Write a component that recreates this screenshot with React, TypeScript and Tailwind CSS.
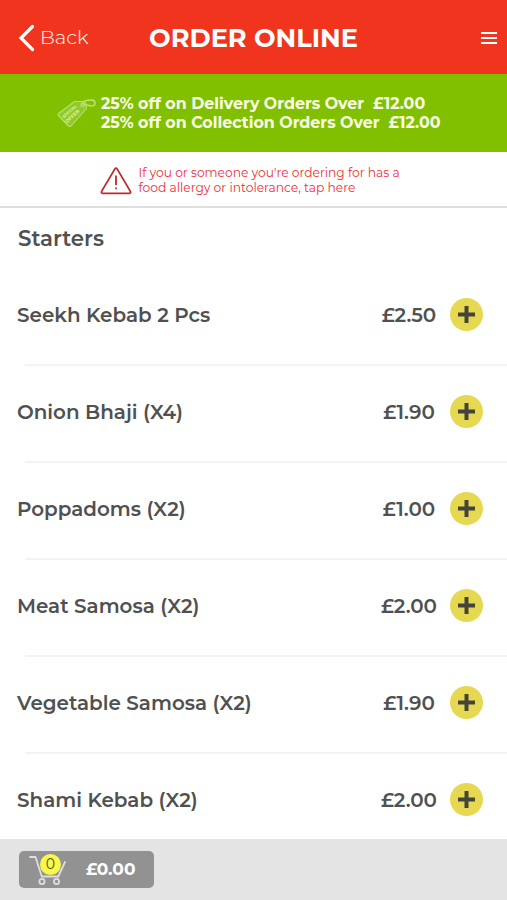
import { useState } from 'react';

const starters = [
    { name: 'Seekh Kebab 2 Pcs', price: '£2.50' },
    { name: 'Onion Bhaji (X4)', price: '£1.90' },
    { name: 'Poppadoms (X2)', price: '£1.00' },
    { name: 'Meat Samosa (X2)', price: '£2.00' },
    { name: 'Vegetable Samosa (X2)', price: '£1.90' },
    { name: 'Shami Kebab (X2)', price: '£2.00' },
];

function OfferTag() {
    return (
        <svg width="40" height="32" viewBox="0 0 40 32" fill="none" stroke="#b9e070" strokeWidth="1.1" strokeLinejoin="round" className="shrink-0">
            <path d="M1.500 16.500 17.500 4.500 25 4.500Q28.500 4.700 29 7l.5 4.500L14.500 28.500Q12.800 30.500 11 28.500L1.500 18.500Q.7 17.500 1.500 16.500Z" fill="#ffffff" fillOpacity="0.15" />
            <circle cx="25.500" cy="8" r="1.800" />
            <path d="M25.500 7.500C26 4 28 3 35 3c4 .3 4 6 0 6-3 0-5-1.500-9-1.500Z" strokeWidth="1.600" />
            <g fontWeight="700" fill="#d8f0a8" stroke="none" textAnchor="middle">
                <text transform="translate(13.500 15.500) rotate(-42)" fontSize="4">SPECIAL</text>
                <text transform="translate(16.500 20.500) rotate(-42)" fontSize="5">OFFER</text>
            </g>
        </svg>
    );
}

function WarningIcon() {
    return (
        <svg width="32" height="28" viewBox="0 0 32 29" preserveAspectRatio="none" fill="none" stroke="#bd2b2b" strokeWidth="1.800" strokeLinejoin="round" strokeLinecap="round" className="mt-[1px] shrink-0">
            <path d="M14.900 1.900Q16 .6 17.100 1.900L30.400 25.300Q31 27.300 29.200 27.300H2.800Q1 27.300 1.600 25.300Z" />
            <path d="M16 9.500v8.500M16 21.800v.4" />
        </svg>
    );
}

function CartIcon() {
    return (
        <svg width="40" height="32" viewBox="0 0 40 32" fill="none" stroke="#dedede" strokeWidth="1.800" strokeLinecap="round" strokeLinejoin="round">
            <path d="M2 3h5.500l6.300 19.500h16.500L37 8" />
            <circle cx="14" cy="27.500" r="2.600" />
            <circle cx="28.500" cy="27.500" r="2.600" />
        </svg>
    );
}

export default function App() {
    const [count, setCount] = useState(0);

    return (
        <div className="flex h-[900px] w-[507px] flex-col overflow-hidden bg-white font-['Montserrat','Inter',sans-serif] text-[#505050]">
            <header className="grid h-[74px] shrink-0 grid-cols-[127px_1fr_127px] items-center bg-[#f0341e] pt-[2px] text-white">
                <button className="flex items-center pl-[18px]">
                    <svg width="17" height="28" viewBox="0 0 17 28" fill="none" stroke="currentColor" strokeWidth="3.200" strokeLinecap="round">
                        <path d="M14.500 2.500 3 14l11.500 11.500" />
                    </svg>
                    <span className="mb-[2px] ml-[5px] text-[19.700px] leading-7 font-light">Back</span>
                </button>
                <h1 className="text-center text-[25.600px] leading-8 font-bold whitespace-nowrap">ORDER ONLINE</h1>
                <button className="flex justify-end pr-[10px]">
                    <svg width="16" height="12" viewBox="0 0 16 12" stroke="currentColor" strokeWidth="1.800">
                        <path d="M0 1h16M0 6h16M0 11h16" />
                    </svg>
                </button>
            </header>

            <section className="flex h-[78px] shrink-0 items-center bg-[#80c000] pl-[57px] text-[15.870px] leading-[19px] font-bold text-[#fbffe8]">
                <OfferTag />
                <div className="ml-[4px] whitespace-pre">
                    <p>{'25% off on Delivery Orders Over  £12.00'}</p>
                    <p>{'25% off on Collection Orders Over  £12.00'}</p>
                </div>
            </section>

            <section className="flex h-[56px] shrink-0 items-center border-b-2 border-[#dedede] pt-[2px] pl-[100px] text-[12.250px] leading-[15px] text-[#ee3038]">
                <WarningIcon />
                <div className="ml-[6.500px] whitespace-nowrap">
                    <p>If you or someone you're ordering for has a</p>
                    <p>food allergy or intolerance, tap here</p>
                </div>
            </section>

            <main className="flex-1 overflow-hidden">
                <h2 className="flex h-[61px] items-center pl-[18px] text-[21.300px] font-semibold">Starters</h2>
                <ul>
                    {starters.map(item => (
                        <li key={item.name}>
                            <div className="flex h-[95px] items-center pr-[24px] pb-[2px] pl-[17px] text-[19.900px] font-semibold">
                                <span>{item.name}</span>
                                <span className="ml-auto w-[60px] text-center">{item.price}</span>
                                <button onClick={() => setCount(count + 1)} className="mb-[2px] ml-[11px] flex size-[33px] items-center justify-center rounded-full bg-[#e6d850]">
                                    <svg width="17" height="17" viewBox="0 0 17 17" stroke="#444438" strokeWidth="4">
                                        <path d="M8.500 0v17M0 8.500h17" />
                                    </svg>
                                </button>
                            </div>
                            <div className="ml-[25px] h-[2px] bg-[#f3f3f3]" />
                        </li>
                    ))}
                </ul>
            </main>

            <footer className="flex h-[61px] shrink-0 items-center bg-[#e4e4e4] pl-[19px]">
                <button className="flex h-[37px] w-[135px] items-center rounded-[5px] bg-[#929292] pl-[9px]">
                    <span className="relative">
                        <CartIcon />
                        <span className="absolute top-0 left-[12px] flex size-[21px] items-center justify-center rounded-full bg-[#f8f84a] text-[14px] text-[#4c4c32]">{count}</span>
                    </span>
                    <span className="mt-[1px] ml-[18px] text-[17px] font-bold text-white">£0.00</span>
                </button>
            </footer>
        </div>
    );
}
